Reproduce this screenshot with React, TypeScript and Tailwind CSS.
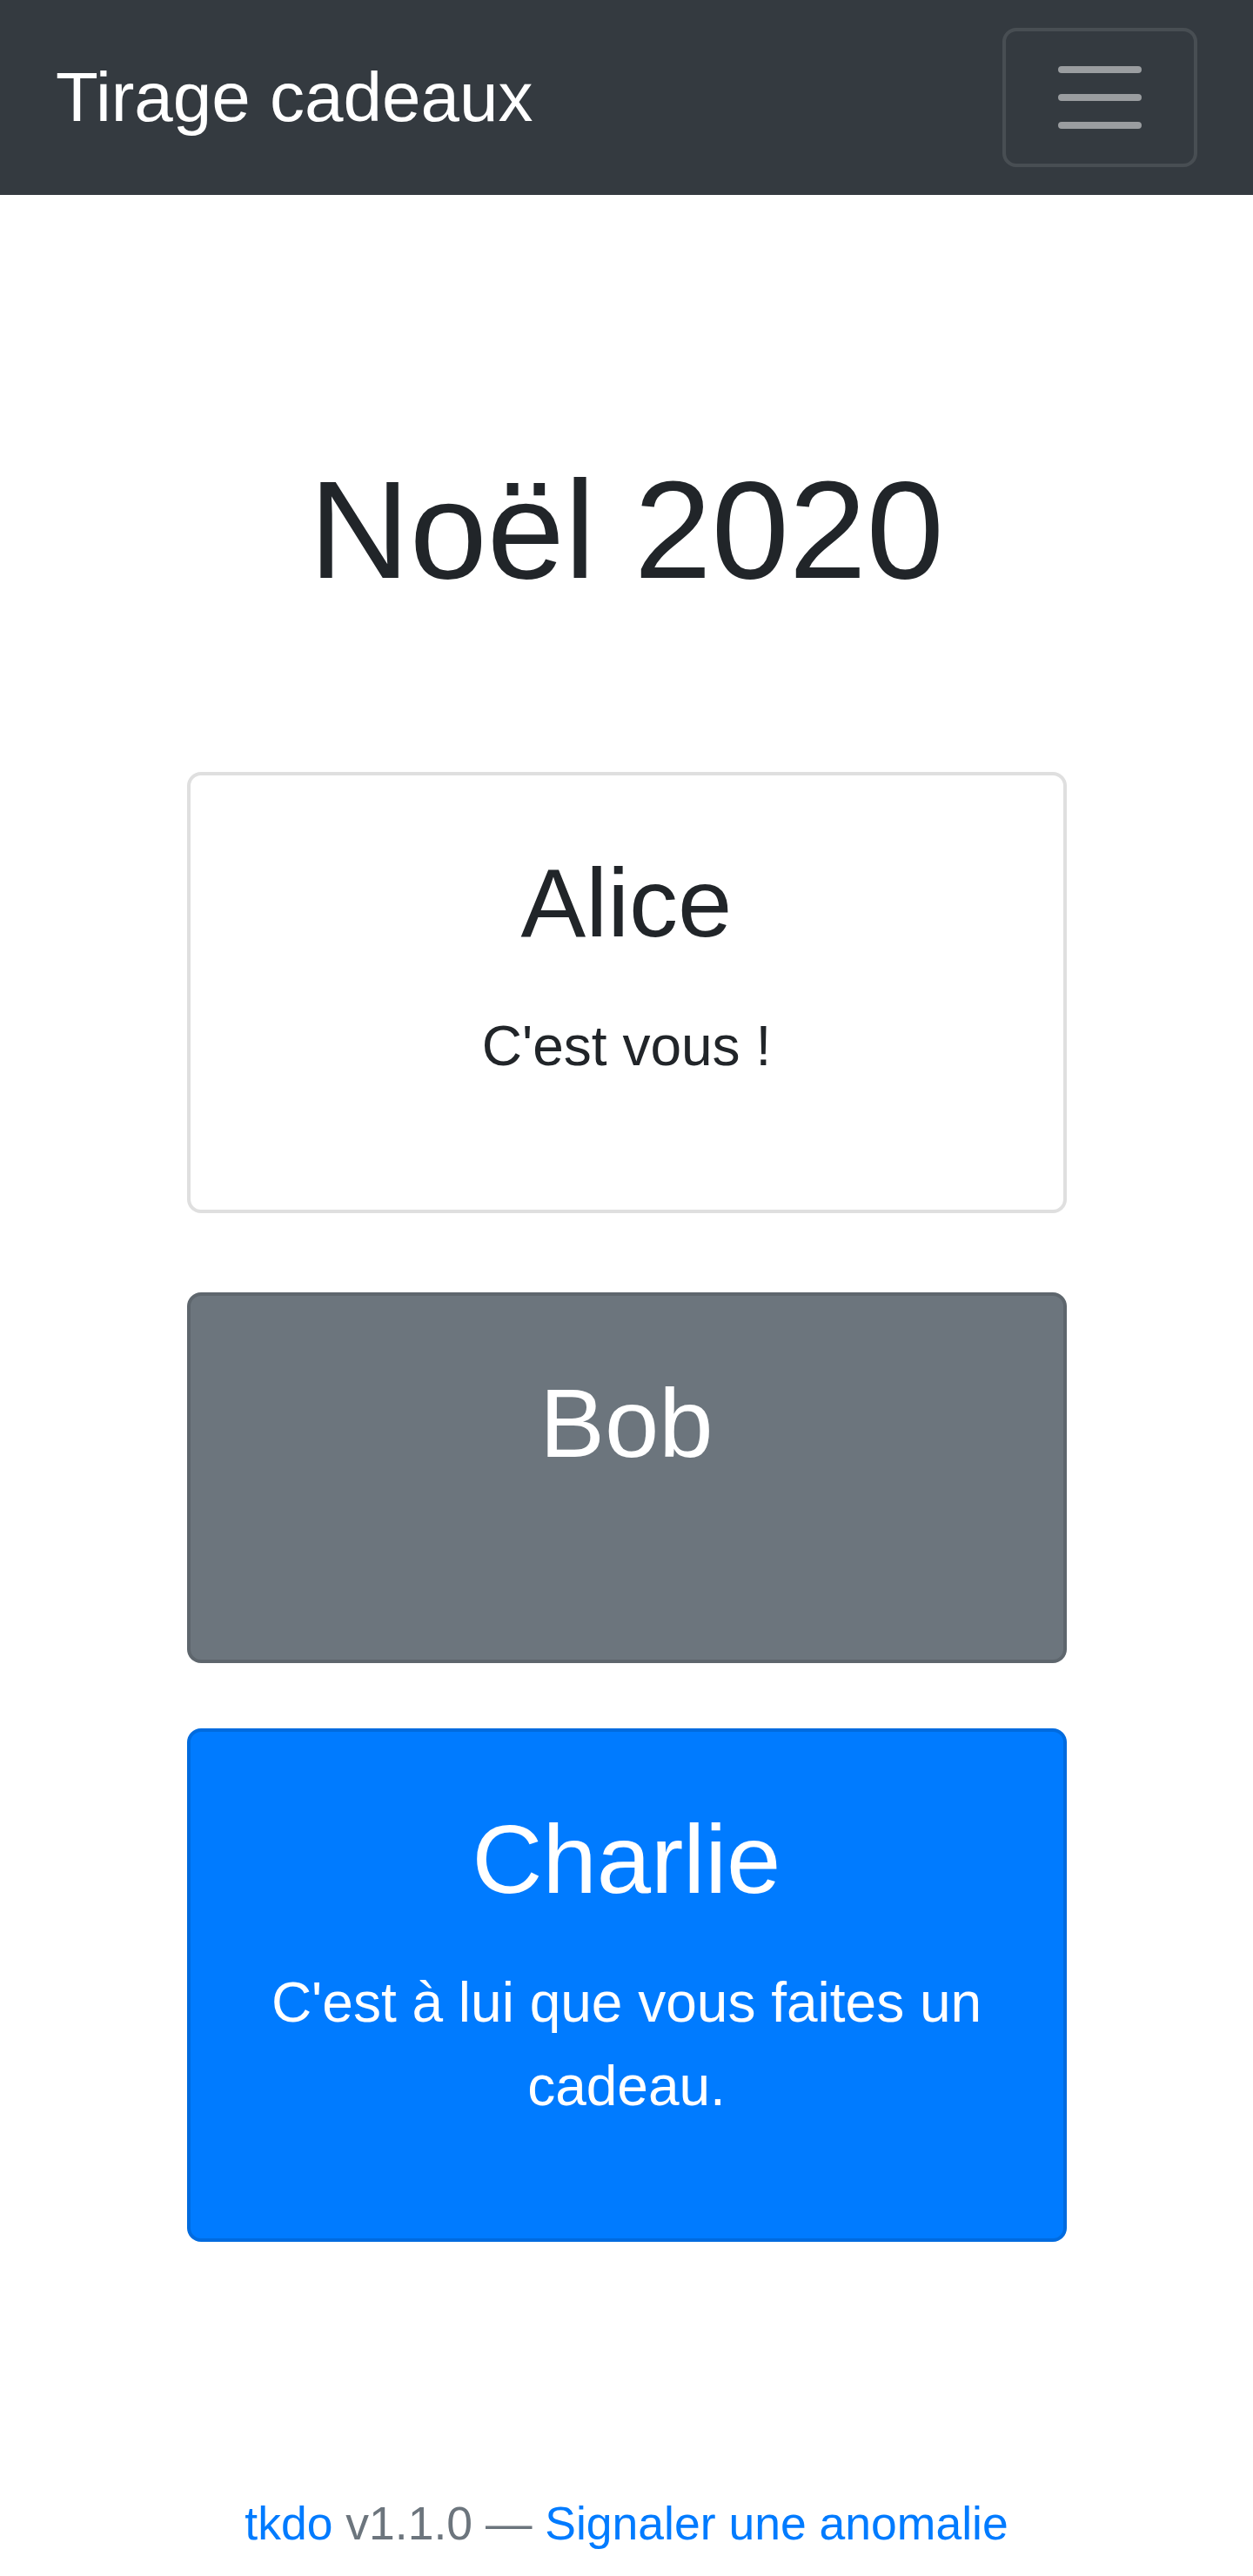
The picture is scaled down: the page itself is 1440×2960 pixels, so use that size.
const font = { fontFamily: '"Liberation Sans", Arial, sans-serif' };

type Draw = {
  name: string;
  note?: string;
  tone: 'light' | 'muted' | 'primary';
  height: string;
};

const tirage: Draw[] = [
  { name: 'Alice', note: "C'est vous !", tone: 'light', height: 'h-[507px]' },
  { name: 'Bob', tone: 'muted', height: 'h-[426px]' },
  { name: 'Charlie', note: "C'est à lui que vous faites un cadeau.", tone: 'primary', height: 'h-[590px]' },
];

const toneClass = {
  light: 'bg-white text-[#212529] border-black/[0.125]',
  muted: 'bg-[#6c757d] text-white border-black/[0.125]',
  primary: 'bg-[#007bff] text-white border-black/[0.125]',
};

const TogglerIcon = () => (
  <svg width="120" height="120" viewBox="0 0 30 30" className="block">
    <path
      d="M4 7h22M4 15h22M4 23h22"
      stroke="rgba(255,255,255,0.5)"
      strokeWidth="2"
      strokeLinecap="round"
      strokeMiterlimit="10"
    />
  </svg>
);

const Card = ({ draw }: { draw: Draw }) => (
  <div
    className={`w-[1011px] mx-auto border-4 rounded-[16px] pt-[80px] px-[80px] text-center ${draw.height} ${toneClass[draw.tone]}`}
  >
    <h3 className="text-[112px] leading-[1.2] font-normal mb-[49px]">{draw.name}</h3>
    {draw.note && <p className="text-[64px] leading-[1.5]">{draw.note}</p>}
  </div>
);

export default function App() {
  return (
    <div className="min-h-[2960px] bg-white flex flex-col" style={font}>
      <nav className="h-[224px] bg-[#343a40] flex items-center justify-between px-[64px]">
        <a className="text-white text-[80px] leading-[1.5] py-[20px]">Tirage cadeaux</a>
        <button className="w-[224px] h-[160px] border-4 border-white/10 rounded-[16px] flex items-center justify-center">
          <TogglerIcon />
        </button>
      </nav>

      <main className="flex flex-col">
        <h1 className="mt-[289px] text-center text-[160px] leading-[1.2] font-normal text-[#212529]">Noël 2020</h1>

        <div className="mt-[182px] flex flex-col">
          <Card draw={tirage[0]} />
          <div className="mt-[91px]">
            <Card draw={tirage[1]} />
          </div>
          <div className="mt-[75px]">
            <Card draw={tirage[2]} />
          </div>
        </div>
      </main>

      <footer className="mt-[284px] text-center text-[53.5px] leading-[1.5]">
        <a className="text-[#007bff]">tkdo</a>
        <span className="text-[#6c757d]"> v1.1.0 — </span>
        <a className="text-[#007bff]">Signaler une anomalie</a>
      </footer>
    </div>
  );
}
